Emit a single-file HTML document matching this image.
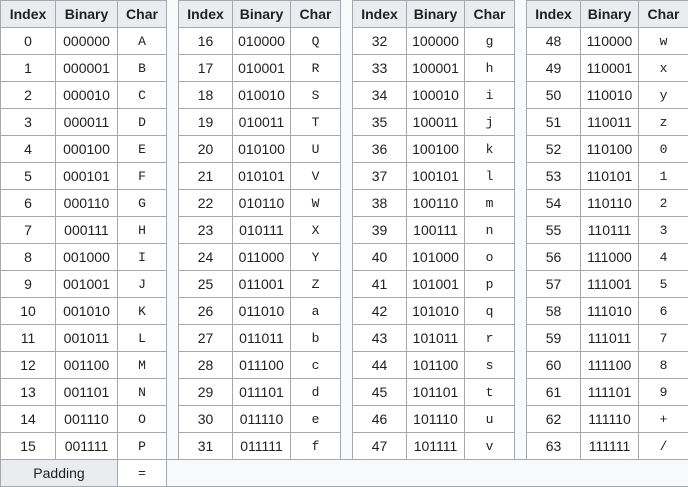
<!DOCTYPE html>
<html><head><meta charset="utf-8"><style>
html,body{margin:0;padding:0;background:#f8f9fa;}
table{border-collapse:collapse;table-layout:fixed;width:688px;font-family:"Liberation Sans",sans-serif;font-size:14px;color:#202122;background:#f8f9fa;}
td,th{border:1px solid #a2a9b1;height:26px;padding:0;text-align:center;background:#fff;overflow:hidden;white-space:nowrap;}
th{background:#eaecf0;font-weight:bold;}
td.c{font-family:"Liberation Mono",monospace;font-size:13px;}
td.g{background:#f8f9fa;border-top:none;border-bottom:none;}
td.p{background:#eaecf0;}
td.e{background:#f8f9fa;}
</style></head><body>
<table>
<colgroup><col style="width:55px"><col style="width:62px"><col style="width:49px"><col style="width:12px"><col style="width:54px"><col style="width:58px"><col style="width:50px"><col style="width:12px"><col style="width:54px"><col style="width:58px"><col style="width:50px"><col style="width:12px"><col style="width:54px"><col style="width:58px"><col style="width:50px"></colgroup>
<tr><th>Index</th><th>Binary</th><th>Char</th><td class="g" rowspan="17"></td><th>Index</th><th>Binary</th><th>Char</th><td class="g" rowspan="17"></td><th>Index</th><th>Binary</th><th>Char</th><td class="g" rowspan="17"></td><th>Index</th><th>Binary</th><th>Char</th></tr>
<tr><td>0</td><td>000000</td><td class="c">A</td><td>16</td><td>010000</td><td class="c">Q</td><td>32</td><td>100000</td><td class="c">g</td><td>48</td><td>110000</td><td class="c">w</td></tr>
<tr><td>1</td><td>000001</td><td class="c">B</td><td>17</td><td>010001</td><td class="c">R</td><td>33</td><td>100001</td><td class="c">h</td><td>49</td><td>110001</td><td class="c">x</td></tr>
<tr><td>2</td><td>000010</td><td class="c">C</td><td>18</td><td>010010</td><td class="c">S</td><td>34</td><td>100010</td><td class="c">i</td><td>50</td><td>110010</td><td class="c">y</td></tr>
<tr><td>3</td><td>000011</td><td class="c">D</td><td>19</td><td>010011</td><td class="c">T</td><td>35</td><td>100011</td><td class="c">j</td><td>51</td><td>110011</td><td class="c">z</td></tr>
<tr><td>4</td><td>000100</td><td class="c">E</td><td>20</td><td>010100</td><td class="c">U</td><td>36</td><td>100100</td><td class="c">k</td><td>52</td><td>110100</td><td class="c">0</td></tr>
<tr><td>5</td><td>000101</td><td class="c">F</td><td>21</td><td>010101</td><td class="c">V</td><td>37</td><td>100101</td><td class="c">l</td><td>53</td><td>110101</td><td class="c">1</td></tr>
<tr><td>6</td><td>000110</td><td class="c">G</td><td>22</td><td>010110</td><td class="c">W</td><td>38</td><td>100110</td><td class="c">m</td><td>54</td><td>110110</td><td class="c">2</td></tr>
<tr><td>7</td><td>000111</td><td class="c">H</td><td>23</td><td>010111</td><td class="c">X</td><td>39</td><td>100111</td><td class="c">n</td><td>55</td><td>110111</td><td class="c">3</td></tr>
<tr><td>8</td><td>001000</td><td class="c">I</td><td>24</td><td>011000</td><td class="c">Y</td><td>40</td><td>101000</td><td class="c">o</td><td>56</td><td>111000</td><td class="c">4</td></tr>
<tr><td>9</td><td>001001</td><td class="c">J</td><td>25</td><td>011001</td><td class="c">Z</td><td>41</td><td>101001</td><td class="c">p</td><td>57</td><td>111001</td><td class="c">5</td></tr>
<tr><td>10</td><td>001010</td><td class="c">K</td><td>26</td><td>011010</td><td class="c">a</td><td>42</td><td>101010</td><td class="c">q</td><td>58</td><td>111010</td><td class="c">6</td></tr>
<tr><td>11</td><td>001011</td><td class="c">L</td><td>27</td><td>011011</td><td class="c">b</td><td>43</td><td>101011</td><td class="c">r</td><td>59</td><td>111011</td><td class="c">7</td></tr>
<tr><td>12</td><td>001100</td><td class="c">M</td><td>28</td><td>011100</td><td class="c">c</td><td>44</td><td>101100</td><td class="c">s</td><td>60</td><td>111100</td><td class="c">8</td></tr>
<tr><td>13</td><td>001101</td><td class="c">N</td><td>29</td><td>011101</td><td class="c">d</td><td>45</td><td>101101</td><td class="c">t</td><td>61</td><td>111101</td><td class="c">9</td></tr>
<tr><td>14</td><td>001110</td><td class="c">O</td><td>30</td><td>011110</td><td class="c">e</td><td>46</td><td>101110</td><td class="c">u</td><td>62</td><td>111110</td><td class="c">+</td></tr>
<tr><td>15</td><td>001111</td><td class="c">P</td><td>31</td><td>011111</td><td class="c">f</td><td>47</td><td>101111</td><td class="c">v</td><td>63</td><td>111111</td><td class="c">/</td></tr>
<tr><td class="p" colspan="2">Padding</td><td class="c">=</td><td class="e" colspan="12"></td></tr>
</table>
</body></html>
